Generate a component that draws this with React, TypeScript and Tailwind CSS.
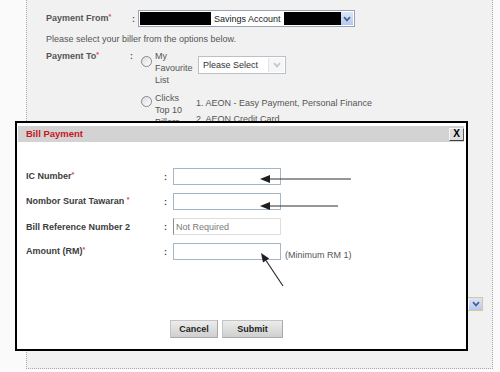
import React from 'react';

const Chevron = ({ color }: { color: string }) => (
  <svg width="8" height="6" viewBox="0 0 8 6">
    <path d="M1 1.2 L4 4.4 L7 1.2" fill="none" stroke={color} strokeWidth="1.7" />
  </svg>
);

const Star = () => <span className="relative -top-[2px] text-[7px] text-[#e0474c]">*</span>;

const Radio = ({ top }: { top: string }) => (
  <span
    className={`${top} block h-[11px] w-[11px] shrink-0 rounded-full border border-[#7f8a96] bg-linear-to-br from-[#dcdcdc] to-white`}
  />
);

const Field = ({ label, star, children }: { label: string; star?: boolean; children: React.ReactNode }) => (
  <div className="flex h-[17px] items-start">
    <span className="w-[138px] self-center font-bold text-[#3c3c3c]">
      {label}
      {star && <Star />}
    </span>
    <span className="w-[9px] self-center font-bold text-[#3c3c3c]">:</span>
    {children}
  </div>
);

const Input = () => <div className="h-[17px] w-[108px] border border-[#a7b6c6] bg-white" />;

const DialogButton = ({ label, width }: { label: string; width: string }) => (
  <button
    className={`${width} h-[18px] border border-[#c4c4c4] border-b-[#a9a9a9] border-r-[#a9a9a9] bg-linear-to-b from-[#ececec] to-[#cfcfcf] text-[9px] font-bold text-[#1e1e1e]`}
  >
    {label}
  </button>
);

export default function App() {
  return (
    <div className="relative h-[372px] w-[500px] overflow-hidden bg-[#fafafa] font-['Liberation_Sans',Arial,sans-serif] text-[9px] leading-[12px]">
      {/* page behind the dialog */}
      <div className="ml-[26px] h-[369px] w-[467px] border-x border-b border-dotted border-[#a9a9a9] bg-[#f1f1f1] pl-[19px] pt-[10px] text-[#555]">
        <div className="flex h-[17px] items-center">
          <span className="w-[86px] font-bold">
            Payment From
            <Star />
          </span>
          <span className="w-[6px] font-bold">:</span>
          <div className="flex h-[17px] w-[217px] items-stretch border border-[#98a4b4] bg-white p-px">
            <span className="w-[71px] bg-black" />
            <span className="self-center px-[3px] text-[#222]">Savings Account</span>
            <span className="flex-1 bg-black" />
            <span className="flex w-[12px] items-center justify-center bg-linear-to-b from-[#dce6fa] to-[#b4c8f0]">
              <Chevron color="#4d6185" />
            </span>
          </div>
        </div>

        <p className="mt-[6px]">Please select your biller from the options below.</p>

        <div className="mt-[5px] flex">
          <span className="w-[84px] font-bold">
            Payment To
            <Star />
          </span>
          <span className="w-[11px] font-bold">:</span>
          <Radio top="mt-[6px]" />
          <div className="ml-[3px] w-[43px]">
            My
            <br />
            Favourite
            <br />
            List
          </div>
          <div className="mt-[6px] flex h-[18px] w-[88px] items-stretch border border-[#b9c0c8] bg-white p-px">
            <span className="flex-1 self-center pl-[3px] text-[#333]">Please Select</span>
            <span className="flex w-[16px] items-center justify-center border-l border-[#e4e4e4] bg-[#f6f6f6]">
              <Chevron color="#c3c8ce" />
            </span>
          </div>
        </div>

        <div className="mt-[6px] flex">
          <span className="w-[95px]" />
          <Radio top="mt-[4px]" />
          <div className="ml-[3px] w-[41px]">
            Clicks
            <br />
            Top 10
            <br />
            Billers
          </div>
          <div className="mt-[3px] leading-[16px]">
            <p>1. AEON - Easy Payment, Personal Finance</p>
            <p>2. AEON Credit Card</p>
          </div>
        </div>

        <div className="mt-[169px] flex justify-end pr-[9px]">
          <div className="flex h-[14px] w-[160px] justify-end border border-[#d6c79a] bg-white">
            <span className="flex w-[13px] items-center justify-center bg-linear-to-b from-[#dce6fa] to-[#b4c8f0]">
              <Chevron color="#4d6185" />
            </span>
          </div>
        </div>
      </div>

      {/* Bill Payment dialog */}
      <div className="absolute left-[15px] top-[121px] flex h-[230px] w-[453px] flex-col border-2 border-black bg-white">
        <div className="ml-px mr-[2px] mt-[3px] flex h-[16px] items-center justify-between bg-[#d3d3d3] pl-[8px]">
          <span className="text-[9.5px] font-bold text-[#c8161d]">Bill Payment</span>
          <button className="flex h-[13px] w-[15px] items-center justify-center border border-[#f4f4f4] border-b-[#404040] border-r-[#5a5a5a] bg-[#dedede] text-[10px] leading-none font-bold text-black">
            X
          </button>
        </div>

        <div className="mt-[26px] flex flex-col gap-[8px] pl-[9px]">
          <Field label="IC Number" star>
            <Input />
          </Field>
          <Field label="Nombor Surat Tawaran " star>
            <Input />
          </Field>
          <Field label="Bill Reference Number 2">
            <div className="flex h-[17px] w-[108px] items-center border border-[#dedede] border-l-[#8c8c8c] bg-white pl-[2px] text-[#7a7a7a]">
              Not Required
            </div>
          </Field>
          <Field label="Amount (RM)" star>
            <Input />
            <span className="ml-[4px] mt-[6px] text-[#555]">(Minimum RM 1)</span>
          </Field>
        </div>

        <div className="mt-[60px] flex gap-[4px] pl-[153px]">
          <DialogButton label="Cancel" width="w-[48px]" />
          <DialogButton label="Submit" width="w-[61px]" />
        </div>
      </div>

      {/* annotation arrows */}
      <svg className="pointer-events-none absolute left-0 top-0" width="500" height="372">
        <g stroke="#2e2e2e" strokeWidth="1.2" fill="#1e1e1e">
          <line x1="268" y1="179" x2="351" y2="179" />
          <polygon points="260,179 270,175 270,183" stroke="none" />
          <line x1="268" y1="206" x2="338" y2="206" />
          <polygon points="260,206 270,202 270,210" stroke="none" />
          <line x1="266" y1="260.5" x2="283" y2="286" />
          <polygon points="261,253 263,262.6 269.2,258.4" stroke="none" />
        </g>
      </svg>
    </div>
  );
}
